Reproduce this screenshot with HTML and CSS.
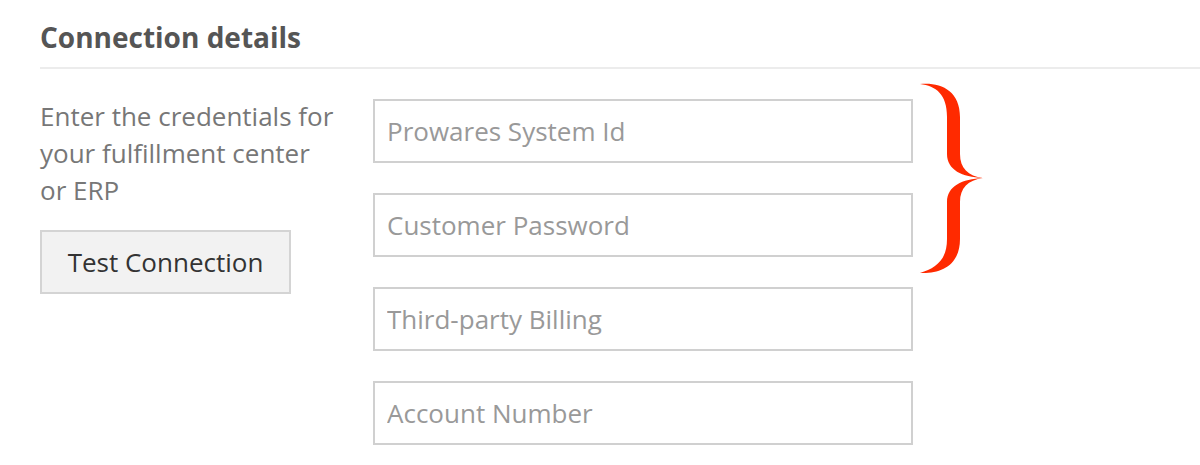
FILE: index.html
```html
<!DOCTYPE html>
<html>
<head>
<meta charset="utf-8">
<link rel="stylesheet" href="styles.css">
</head>
<body>
<section class="panel">
  <h2 class="title">Connection details</h2>
  <div class="content">
    <div class="side">
      <p class="desc">Enter the credentials for your fulfillment center or ERP</p>
      <button class="btn" type="button">Test Connection</button>
    </div>
    <div class="fields">
      <input class="field" type="text" placeholder="Prowares System Id">
      <input class="field" type="password" placeholder="Customer Password">
      <input class="field" type="text" placeholder="Third-party Billing">
      <input class="field" type="text" placeholder="Account Number">
      <svg class="brace" width="68" height="194" viewBox="0 0 68 194" aria-hidden="true">
        <path fill="#ff2a00" d="M2,2 C22,0 42,8 42,35 L42,72 C42,86 50,94 65,96 C50,98 42,106 42,120 L42,157 C42,184 22,192 2,191 C18,186 29,178 29,157 L29,120 C29,104 44,97 65,96 C44,95 29,88 29,72 L29,35 C29,12 18,4 2,2 Z"/>
      </svg>
    </div>
  </div>
</section>
</body>
</html>
```

FILE: styles.css
```css
html, body {
  margin: 0;
  padding: 0;
  background: #fff;
}

body {
  font-family: "Open Sans", "Liberation Sans", sans-serif;
}

.panel {
  padding-left: 40px;
}

.title {
  margin: 0;
  padding-top: 19px;
  padding-bottom: 12px;
  font-size: 28px;
  line-height: 36px;
  font-weight: 700;
  color: #555;
  border-bottom: 2px solid #ececec;
}

.content {
  display: grid;
  grid-template-columns: 300px 540px;
  column-gap: 33px;
  padding-top: 30px;
}

.side {
  display: flex;
  flex-direction: column;
  align-items: flex-start;
}

.desc {
  margin: -1px 0 0;
  max-width: 298px;
  font-size: 26px;
  line-height: 37px;
  color: #777;
}

.btn {
  margin-top: 21px;
  width: 251px;
  height: 64px;
  background: #f2f2f2;
  border: 2px solid #d4d4d4;
  border-radius: 0;
  font-family: inherit;
  font-size: 26px;
  color: #333;
  padding: 0;
}

.fields {
  position: relative;
  display: flex;
  flex-direction: column;
  gap: 30px;
}

.field {
  box-sizing: border-box;
  width: 540px;
  height: 64px;
  margin: 0;
  border: 2px solid #d0d0d0;
  border-radius: 0;
  padding: 0 12px;
  font-family: inherit;
  font-size: 26px;
  color: #555;
  background: #fff;
}

.field::placeholder {
  color: #999;
  opacity: 1;
}

.brace {
  position: absolute;
  left: 545px;
  top: -17px;
}
```
